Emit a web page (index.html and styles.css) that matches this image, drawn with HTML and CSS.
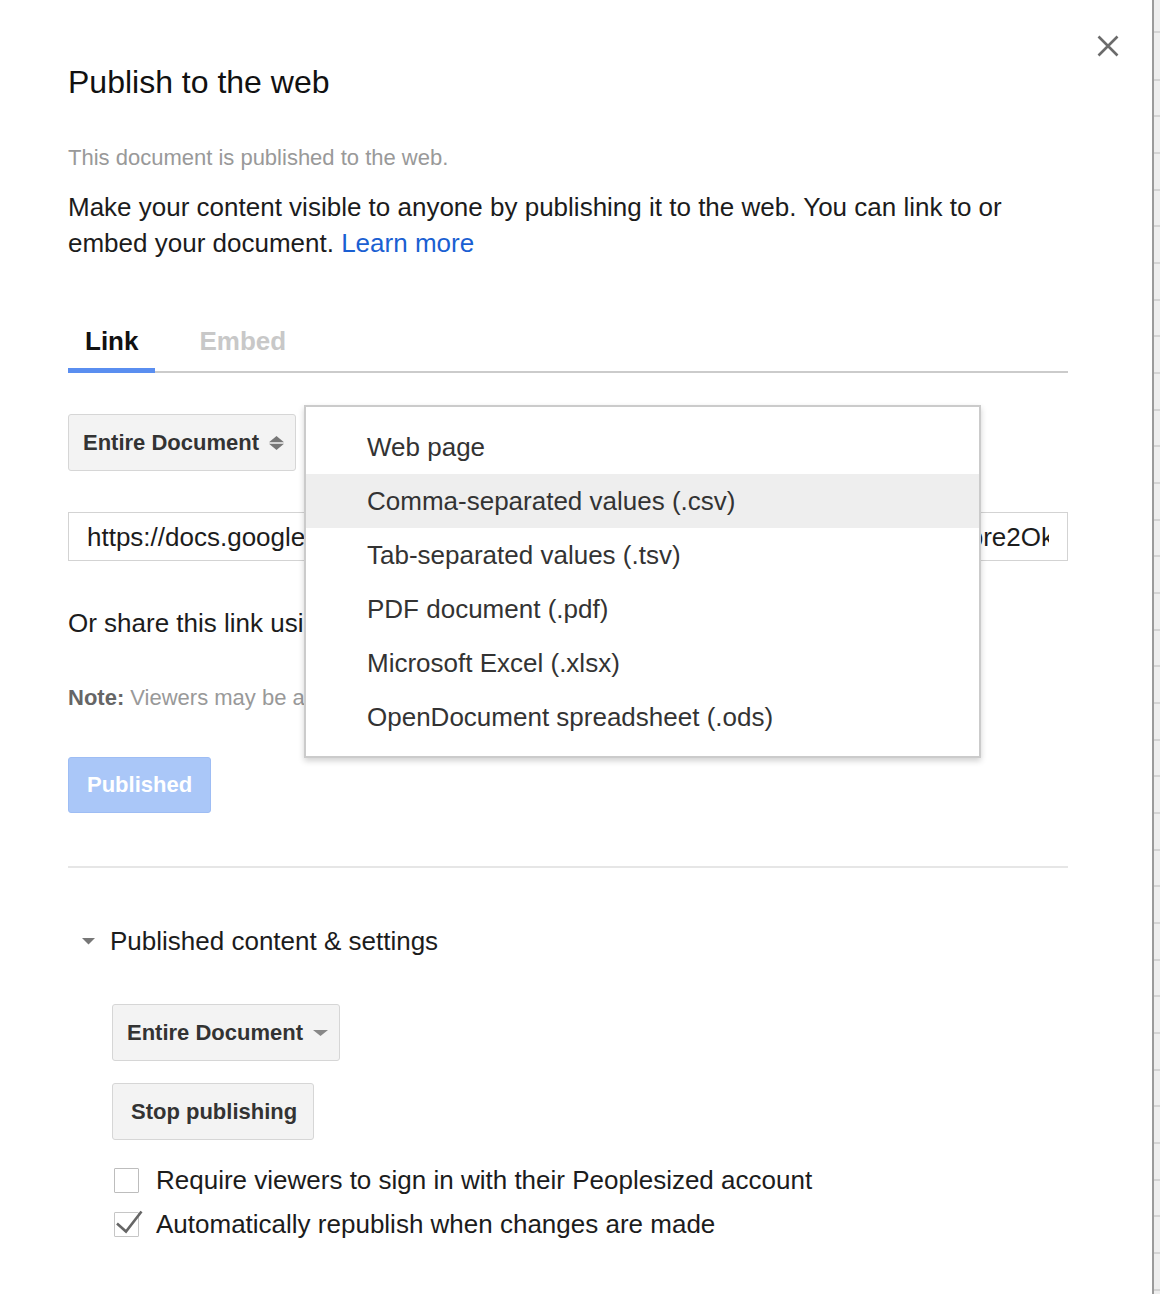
FILE: index.html
```html
<!DOCTYPE html>
<html lang="en">
<head>
<meta charset="utf-8">
<title>Publish to the web</title>
<link rel="stylesheet" href="styles.css">
</head>
<body>
<div class="page">
  <div class="dialog">
    <button class="close" aria-label="Close">
      <svg width="22" height="22" viewBox="0 0 22 22"><path d="M1.5 1.5L20.5 20.5M20.5 1.5L1.5 20.5" stroke="#6b6b6b" stroke-width="2.6" fill="none"/></svg>
    </button>
    <h1 class="title">Publish to the web</h1>
    <p class="status">This document is published to the web.</p>
    <p class="intro">Make your content visible to anyone by publishing it to the web. You can link to or embed your document. <a class="link" href="#">Learn more</a></p>

    <div class="tabs">
      <div class="tab active">Link</div>
      <div class="tab embed">Embed</div>
    </div>

    <div class="select">
      <span>Entire Document</span>
      <svg width="15" height="14" viewBox="0 0 15 14"><polygon points="7.5,0 15,6.2 0,6.2" fill="#777"/><polygon points="0,7.8 15,7.8 7.5,14" fill="#777"/></svg>
    </div>

    <div class="url">
      <span class="url-start">https://docs.google.com/spreadsheets/d/e/2PACX-1vQ</span>
      <span class="url-end-wrap"><span class="url-end">pre2Ok</span></span>
    </div>

    <p class="share">Or share this link using:</p>
    <p class="note"><b>Note:</b> Viewers may be able to see changes</p>

    <button class="btn-published">Published</button>

    <hr class="divider">

    <div class="section-head">
      <svg class="tri" width="13" height="7" viewBox="0 0 13 7"><polygon points="0,0 13,0 6.5,6.5" fill="#777"/></svg>
      <span>Published content &amp; settings</span>
    </div>

    <div class="section-body">
      <div class="btn dropdown">
        <span>Entire Document</span>
        <svg width="15" height="6" viewBox="0 0 15 6"><polygon points="0,0 15,0 7.5,6" fill="#888"/></svg>
      </div>
      <div class="btn stop">Stop publishing</div>
      <label class="check"><span class="box"></span><span>Require viewers to sign in with their Peoplesized account</span></label>
      <label class="check second"><span class="box checked"><svg class="tick" width="30" height="24" viewBox="0 0 30 24"><polyline points="3,12.5 12,20.5 27.5,0.5" fill="none" stroke="#666" stroke-width="2.6"/></svg></span><span>Automatically republish when changes are made</span></label>
    </div>

    <ul class="menu">
      <li>Web page</li>
      <li class="hover">Comma-separated values (.csv)</li>
      <li>Tab-separated values (.tsv)</li>
      <li>PDF document (.pdf)</li>
      <li>Microsoft Excel (.xlsx)</li>
      <li>OpenDocument spreadsheet (.ods)</li>
    </ul>
  </div>
  <div class="strip"></div>
</div>
</body>
</html>
```

FILE: styles.css
```css
* { box-sizing: border-box; }
html, body { margin: 0; background: #fff; }
body {
  font-family: "Liberation Sans", Arial, sans-serif;
  color: #222;
}
.page {
  display: flex;
  height: 1294px;
  overflow: hidden;
}
.dialog {
  position: relative;
  flex: 1;
  padding: 0 84px 0 68px;
  background: #fff;
}
.strip {
  width: 8px;
  border-left: 2px solid #9b9b9b;
  background-color: #eeeeee;
  background-image: repeating-linear-gradient(to bottom, transparent 0, transparent 34.67px, #d4d4d4 34.67px, #d4d4d4 36.67px);
  background-position: 0 44px;
}
.close {
  position: absolute;
  left: 1097px;
  top: 35px;
  padding: 0;
  border: 0;
  background: none;
  width: 22px;
  height: 22px;
}
.close svg { display: block; }
.title {
  margin: 62px 0 0;
  font-size: 32px;
  line-height: 40px;
  font-weight: normal;
  color: #111;
}
.status {
  margin: 41px 0 0;
  font-size: 22px;
  line-height: 30px;
  color: #999;
}
.intro {
  margin: 16px 0 0;
  font-size: 26px;
  line-height: 36px;
  color: #1c1c1c;
}
.link { color: #1a5fd2; text-decoration: none; }

.tabs {
  display: flex;
  margin-top: 62px;
  border-bottom: 2px solid #cbcbcb;
}
.tab {
  font-size: 26px;
  line-height: 36px;
  font-weight: bold;
  color: #c8c8c8;
  padding: 0 17px 9px;
  margin-bottom: -2px;
  border-bottom: 5px solid transparent;
}
.tab.active { color: #111; border-bottom-color: #5a8ef0; }
.tab.embed { margin-left: 27px; }

.select {
  display: inline-flex;
  align-items: center;
  gap: 10px;
  margin-top: 41px;
  height: 57px;
  padding: 0 11px 0 14px;
  border: 1px solid #d6d6d6;
  border-radius: 3px;
  background: #f3f3f3;
  font-size: 22px;
  font-weight: bold;
  color: #333;
}
.select svg { display: block; }

.url {
  display: flex;
  margin-top: 41px;
  height: 49px;
  padding: 6px 18px 0 18px;
  border: 1px solid #d3d3d3;
  font-size: 26px;
  line-height: 36px;
  color: #1c1c1c;
  overflow: hidden;
}
.url-start {
  flex: 1;
  min-width: 0;
  white-space: nowrap;
  overflow: hidden;
}
.url-end-wrap {
  display: flex;
  justify-content: flex-end;
  width: 90px;
  overflow: hidden;
  white-space: nowrap;
}
.url-end { margin-right: -5px; }

.share {
  margin: 44px 0 0;
  font-size: 26px;
  line-height: 36px;
  white-space: nowrap;
  color: #1c1c1c;
}
.note {
  margin: 42px 0 0;
  font-size: 22px;
  line-height: 30px;
  color: #999;
  white-space: nowrap;
}
.note b { color: #666; }

.btn-published {
  display: block;
  margin-top: 44px;
  height: 56px;
  padding: 0 18px;
  background: #aac7f8;
  border: 1px solid #9ebdf4;
  border-radius: 3px;
  color: #fff;
  font-family: inherit;
  font-size: 22px;
  font-weight: bold;
}

.divider {
  margin: 53px 0 0;
  border: 0;
  height: 2px;
  background: #e6e6e6;
}

.section-head {
  display: flex;
  align-items: center;
  margin-top: 55px;
  padding-left: 14px;
  font-size: 26px;
  line-height: 36px;
  color: #1c1c1c;
}
.section-head .tri { display: block; margin-right: 15px; }

.section-body {
  display: flex;
  flex-direction: column;
  align-items: flex-start;
  padding-left: 44px;
}
.btn {
  display: inline-flex;
  align-items: center;
  height: 57px;
  border: 1px solid #d6d6d6;
  border-radius: 3px;
  background: #f3f3f3;
  font-size: 22px;
  font-weight: bold;
  color: #333;
}
.dropdown {
  margin-top: 45px;
  gap: 10px;
  padding: 0 11px 0 14px;
}
.dropdown svg { display: block; }
.stop {
  margin-top: 22px;
  padding: 0 16px 0 18px;
}

.check {
  display: flex;
  align-items: center;
  margin-top: 22px;
  font-size: 26px;
  line-height: 36px;
  color: #1c1c1c;
}
.check.second { margin-top: 8px; }
.box {
  position: relative;
  width: 25px;
  height: 25px;
  margin-left: 2px;
  margin-right: 17px;
  border: 1.5px solid #bdbdbd;
  border-radius: 1px;
  background: #fff;
}
.box.checked { border-color: #c6c6c6; }
.tick {
  position: absolute;
  left: -1.5px;
  top: -1.5px;
  overflow: visible;
}

.menu {
  position: absolute;
  left: 304px;
  top: 405px;
  width: 677px;
  margin: 0;
  padding: 13px 0 12px;
  list-style: none;
  background: #fff;
  border: 2px solid #cbcbcb;
  box-shadow: 0 3px 6px rgba(0, 0, 0, 0.18);
}
.menu li {
  height: 54px;
  line-height: 54px;
  padding-left: 61px;
  font-size: 26px;
  color: #333;
  white-space: nowrap;
}
.menu li.hover { background: #eeeeee; }
```
